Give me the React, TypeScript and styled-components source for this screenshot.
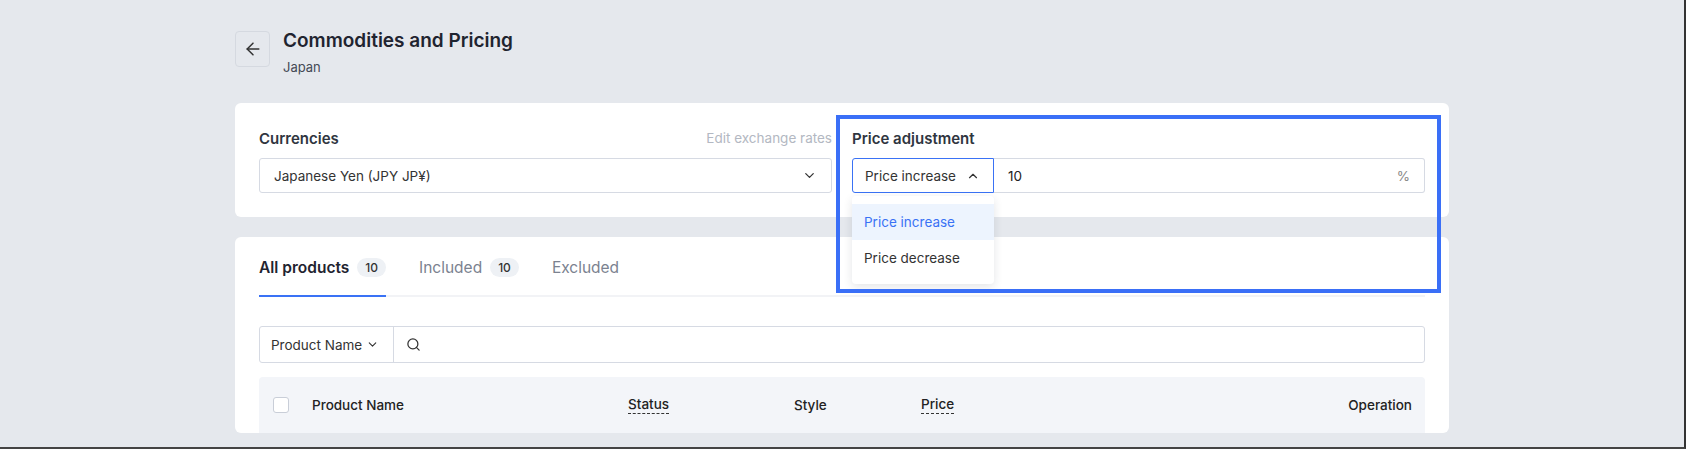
import React from 'react';
import styled, { createGlobalStyle } from 'styled-components';
import { ArrowLeft, ChevronDown, ChevronUp, Search } from 'lucide-react';

const Global = createGlobalStyle`
  html, body { margin: 0; padding: 0; background: #fff; }
  body { font-family: Inter, "Noto Sans", "Liberation Sans", sans-serif; color: #1f2430; }
`;

const Frame = styled.div`
  width: 1684px;
  height: 447px;
  background: #e5e8ed;
  border-right: 2px solid #333;
  border-bottom: 2px solid #444;
  overflow: hidden;
  position: relative;
`;

const Content = styled.div`
  width: 1214px;
  margin-left: 235px;
  padding-top: 31px;
  display: flex;
  flex-direction: column;
`;

const Header = styled.div`
  display: flex;
  gap: 13px;
  margin-bottom: 28px;
`;

const BackButton = styled.button`
  width: 35px;
  height: 36px;
  border: 1px solid #d5d9e0;
  border-radius: 4px;
  background: transparent;
  display: flex;
  align-items: center;
  justify-content: center;
  padding: 0;
  color: #333;
`;

const Title = styled.div`
  font-size: 19px;
  font-weight: 600;
  line-height: 24px;
  margin-top: -2px;
`;

const Sub = styled.div`
  font-size: 13px;
  color: #444a55;
  margin-top: 6px;
`;

const Card = styled.div`
  background: #fff;
  border-radius: 6px;
  padding: 0 24px;
`;

const TopCard = styled(Card)`
  height: 114px;
  box-sizing: border-box;
  padding-top: 24px;
  display: grid;
  grid-template-columns: 1fr 1fr;
  gap: 20px;
  margin-bottom: 20px;
`;

const Field = styled.div`
  display: flex;
  flex-direction: column;
`;

const LabelRow = styled.div`
  display: flex;
  justify-content: space-between;
  align-items: center;
  height: 22px;
  margin-bottom: 9px;
`;

const Label = styled.div`
  font-size: 15px;
  font-weight: 600;
  color: #2f3540;
`;

const Link = styled.div`
  font-size: 13.5px;
  color: #b3b8c2;
`;

const Input = styled.div`
  height: 35px;
  box-sizing: border-box;
  border: 1px solid #d6dae3;
  border-radius: 3px;
  display: flex;
  align-items: center;
  padding: 0 14px;
  font-size: 13.5px;
  color: #333;
  justify-content: space-between;
`;

const Split = styled.div`
  display: flex;
  height: 35px;
  position: relative;
`;

const TypeSelect = styled.div`
  width: 142px;
  box-sizing: border-box;
  border: 1px solid #3a72f5;
  border-radius: 3px 0 0 3px;
  display: flex;
  align-items: center;
  gap: 10px;
  padding: 0 12px;
  font-size: 13.5px;
  color: #333;
`;

const Amount = styled(Input)`
  flex: 1;
  border-left: none;
  border-radius: 0 3px 3px 0;
  color: #222;
  & span:last-child { color: #888; }
`;

const Menu = styled.div`
  position: absolute;
  top: 38px;
  left: 0;
  width: 142px;
  background: #fff;
  border-radius: 4px;
  box-shadow: 0 3px 10px rgba(30, 40, 60, 0.12);
  padding: 8px 0;
  z-index: 3;
`;

const MenuItem = styled.div<{ $active?: boolean }>`
  height: 36px;
  display: flex;
  align-items: center;
  padding: 0 12px;
  font-size: 13.5px;
  background: ${p => (p.$active ? '#edf4fe' : '#fff')};
  color: ${p => (p.$active ? '#3a72f5' : '#333')};
`;

const Highlight = styled.div`
  position: absolute;
  left: 836px;
  top: 115px;
  width: 605px;
  height: 178px;
  box-sizing: border-box;
  border: 4px solid #3a6ff7;
  pointer-events: none;
  z-index: 4;
`;

const Tabs = styled.div`
  display: flex;
  gap: 33px;
  border-bottom: 2px solid #f2f3f6;
  height: 60px;
  padding-top: 20px;
  box-sizing: border-box;
`;

const Tab = styled.div<{ $active?: boolean }>`
  display: flex;
  align-items: flex-start;
  gap: 8px;
  font-size: 15.5px;
  font-weight: ${p => (p.$active ? 600 : 400)};
  color: ${p => (p.$active ? '#1f2430' : '#7b8290')};
  border-bottom: 2px solid ${p => (p.$active ? '#3a72f5' : 'transparent')};
  margin-bottom: -2px;
  padding-top: 1px;
`;

const Count = styled.span`
  font-size: 12px;
  font-weight: 500;
  color: #333;
  background: #eef1f5;
  border-radius: 10px;
  padding: 2px 8px;
`;

const SearchBar = styled.div`
  margin-top: 29px;
  height: 35px;
  border: 1px solid #d6dae3;
  border-radius: 3px;
  display: flex;
`;

const FieldPick = styled.div`
  width: 134px;
  box-sizing: border-box;
  border-right: 1px solid #d6dae3;
  display: flex;
  align-items: center;
  gap: 4px;
  padding-left: 11px;
  font-size: 13.5px;
  color: #333;
`;

const SearchIcon = styled.div`
  display: flex;
  align-items: center;
  padding-left: 12px;
  color: #333;
`;

const TableHead = styled.div`
  margin-top: 14px;
  height: 56px;
  background: #f3f5f9;
  border-radius: 4px 4px 0 0;
  display: grid;
  grid-template-columns: 39px 316px 166px 127px 1fr auto;
  align-items: center;
  padding: 0 13px 0 14px;
  font-size: 13.5px;
  font-weight: 500;
  color: #222;
`;

const Check = styled.div`
  width: 14px;
  height: 14px;
  border: 1px solid #c9ced8;
  border-radius: 3px;
  background: #fff;
`;

const Dotted = styled.span`
  border-bottom: 1px dashed #333;
  padding-bottom: 1px;
  justify-self: start;
`;

export default function App() {
  return (
    <>
      <Global />
      <Frame>
        <Content>
          <Header>
            <BackButton><ArrowLeft size={20} strokeWidth={1.8} /></BackButton>
            <div>
              <Title>Commodities and Pricing</Title>
              <Sub>Japan</Sub>
            </div>
          </Header>
          <TopCard>
            <Field>
              <LabelRow>
                <Label>Currencies</Label>
                <Link>Edit exchange rates</Link>
              </LabelRow>
              <Input>
                <span>Japanese Yen (JPY JP¥)</span>
                <ChevronDown size={15} />
              </Input>
            </Field>
            <Field>
              <LabelRow>
                <Label>Price adjustment</Label>
              </LabelRow>
              <Split>
                <TypeSelect>
                  <span>Price increase</span>
                  <ChevronUp size={14} />
                </TypeSelect>
                <Amount>
                  <span>10</span>
                  <span>%</span>
                </Amount>
                <Menu>
                  <MenuItem $active>Price increase</MenuItem>
                  <MenuItem>Price decrease</MenuItem>
                </Menu>
              </Split>
            </Field>
          </TopCard>
          <Card>
            <Tabs>
              <Tab $active>All products <Count>10</Count></Tab>
              <Tab>Included <Count>10</Count></Tab>
              <Tab>Excluded</Tab>
            </Tabs>
            <SearchBar>
              <FieldPick>Product Name <ChevronDown size={13} /></FieldPick>
              <SearchIcon><Search size={15} /></SearchIcon>
            </SearchBar>
            <TableHead>
              <Check />
              <span>Product Name</span>
              <Dotted>Status</Dotted>
              <span>Style</span>
              <Dotted>Price</Dotted>
              <span>Operation</span>
            </TableHead>
          </Card>
        </Content>
        <Highlight />
      </Frame>
    </>
  );
}
